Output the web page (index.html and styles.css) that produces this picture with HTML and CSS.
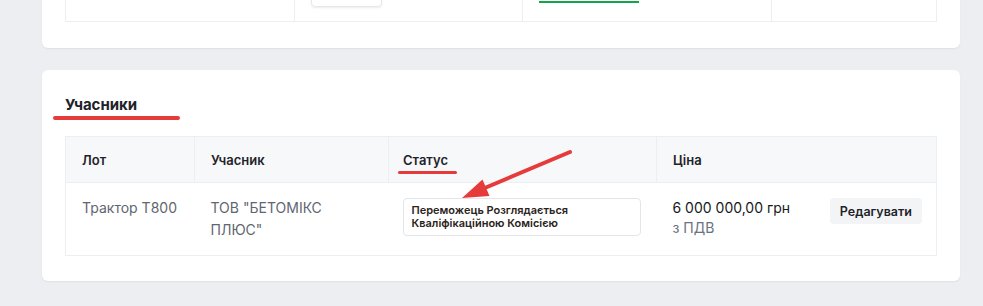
FILE: index.html
```html
<!DOCTYPE html>
<html lang="uk">
<head>
    <meta charset="UTF-8">
    <meta name="viewport" content="width=device-width, initial-scale=1.0">
    <title>Учасники</title>
    <link rel="stylesheet" href="styles.css">
</head>
<body>
    <div class="page">
        <!-- попередня картка (видно лише низ) -->
        <div class="card card-prev">
            <table class="grid grid-prev">
                <tr>
                    <td class="c1"></td>
                    <td class="c2"><span class="ghost-btn"></span></td>
                    <td class="c3"><a class="doc-link" href="#" aria-label="Протокол"></a></td>
                    <td class="c4"></td>
                </tr>
            </table>
        </div>

        <!-- Учасники -->
        <div class="card">
            <h2 class="card-title"><span class="mark">Учасники</span></h2>

            <table class="grid">
                <thead>
                    <tr>
                        <th class="col-lot">Лот</th>
                        <th class="col-member">Учасник</th>
                        <th class="col-status"><span class="mark mark-sm">Статус</span></th>
                        <th class="col-price">Ціна</th>
                    </tr>
                </thead>
                <tbody>
                    <tr>
                        <td class="muted">Трактор Т800</td>
                        <td class="muted"><div class="member-name">ТОВ "БЕТОМІКС ПЛЮС"</div></td>
                        <td class="status-cell">
                            <div class="status-box">Переможець Розглядається Кваліфікаційною Комісією</div>
                        </td>
                        <td>
                            <div class="price-cell">
                                <div>
                                    <div class="price">6 000 000,00 грн</div>
                                    <div class="vat">з ПДВ</div>
                                </div>
                                <button class="edit-btn">Редагувати</button>
                            </div>
                        </td>
                    </tr>
                </tbody>
            </table>

            <svg class="arrow" width="180" height="70" viewBox="0 0 180 70">
                <line x1="170" y1="12" x2="80" y2="50" stroke="#e63b3b" stroke-width="4" stroke-linecap="round"/>
                <polygon points="62,58 82.5,39.5 89.5,56" fill="#e63b3b"/>
            </svg>
        </div>
    </div>
</body>
</html>
```

FILE: styles.css
```css
* {
    box-sizing: border-box;
    margin: 0;
    padding: 0;
}

body {
    background: #edeef2;
    font-family: Inter, "Noto Sans", sans-serif;
    color: #1f2329;
    overflow: hidden;
}

.page {
    padding: 0 23px 0 42px;
}

.card {
    position: relative;
    background: #ffffff;
    border-radius: 6px;
    box-shadow: 0 1px 2px rgba(0,0,0,0.06);
    padding: 23px 23px 25px;
    margin-bottom: 22px;
}

.card-prev {
    margin-top: -55px;
    padding-bottom: 26px;
}

/* таблиці */
.grid {
    width: 100%;
    border-collapse: collapse;
    border: 1px solid #eceef1;
    table-layout: fixed;
}

.grid-prev td {
    height: 48px;
    padding: 14px 16px 0;
    vertical-align: top;
    border-left: 1px solid #eceef1;
}

.grid-prev .c1 { width: 229px; }
.grid-prev .c2 { width: 228px; }
.grid-prev .c3 { width: 249px; }

.ghost-btn {
    display: block;
    width: 71px;
    height: 24px;
    border: 1px solid #e6e7ec;
    border-radius: 4px;
    box-shadow: 0 1px 2px rgba(0,0,0,0.08);
}

.doc-link {
    display: block;
    width: 100px;
    height: 20px;
    border-bottom: 2px solid #16a34a;
}

.grid th {
    height: 46px;
    background: #f7f8fa;
    border-left: 1px solid #eceef1;
    border-bottom: 1px solid #eceef1;
    text-align: left;
    font-size: 13px;
    font-weight: 600;
    padding: 0 16px;
}

.grid th.col-status,
.grid td.status-cell {
    padding-left: 14px;
}

.grid td {
    padding: 14px 16px;
    vertical-align: top;
    font-size: 14px;
    line-height: 22px;
}

.col-lot { width: 129px; }
.col-member { width: 194px; }
.col-status { width: 268px; }

.muted {
    color: #5f6670;
}

.member-name {
    max-width: 140px;
}

/* заголовок картки */
.card-title {
    font-size: 15px;
    font-weight: 700;
    line-height: 20px;
    margin: 2px 0 21px;
}

.mark {
    position: relative;
    display: inline-block;
}

.mark::after {
    content: "";
    position: absolute;
    left: -12px;
    width: 127px;
    bottom: -5px;
    height: 4px;
    border-radius: 2px;
    background: #e63b3b;
}

.mark-sm::after {
    left: -5px;
    width: 59px;
    bottom: -6px;
    height: 3px;
}

.status-box {
    border: 1px solid #e3e5ea;
    border-radius: 4px;
    padding: 5px 8px 5px 8px;
    margin: 1px 0 0 0;
    font-size: 11px;
    font-weight: 600;
    line-height: 13px;
    color: #2a2420;
}

.price-cell {
    display: flex;
    justify-content: space-between;
    align-items: flex-start;
}

.price {
    color: #17191c;
}

.vat {
    color: #6b7280;
    margin-top: -2px;
}

.edit-btn {
    margin-top: 1px;
    margin-right: -2px;
    background: #f3f4f6;
    border: none;
    border-radius: 4px;
    padding: 0 10px;
    height: 26px;
    font-family: inherit;
    font-size: 12.5px;
    font-weight: 600;
    color: #1f2329;
}

.arrow {
    position: absolute;
    left: 358px;
    top: 70px;
}
```
